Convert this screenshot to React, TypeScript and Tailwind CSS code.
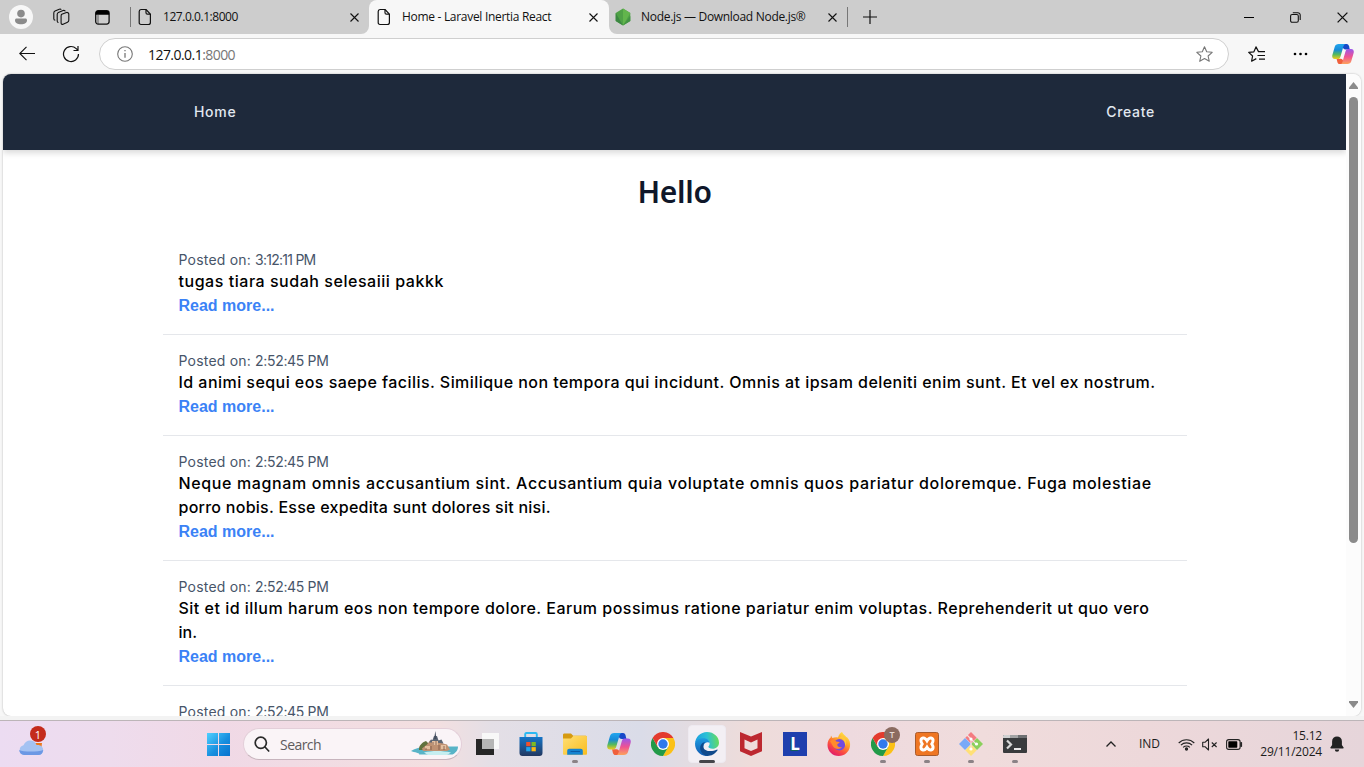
import React from 'react';

type Post = { time: string; timeCls: string; lines: { text: string; cls: string }[] };

const posts: Post[] = [
  {
    time: '3:12:11 PM',
    timeCls: 'tracking-[-0.75px]',
    lines: [{ text: 'tugas tiara sudah selesaiii pakkk', cls: 'tracking-[0.54px]' }],
  },
  {
    time: '2:52:45 PM',
    timeCls: 'tracking-[-0.33px]',
    lines: [
      {
        text: 'Id animi sequi eos saepe facilis. Similique non tempora qui incidunt. Omnis at ipsam deleniti enim sunt. Et vel ex nostrum.',
        cls: 'tracking-[0.452px]',
      },
    ],
  },
  {
    time: '2:52:45 PM',
    timeCls: 'tracking-[-0.33px]',
    lines: [
      {
        text: 'Neque magnam omnis accusantium sint. Accusantium quia voluptate omnis quos pariatur doloremque. Fuga molestiae',
        cls: 'tracking-[0.63px]',
      },
      { text: 'porro nobis. Esse expedita sunt dolores sit nisi.', cls: 'tracking-[0.26px]' },
    ],
  },
  {
    time: '2:52:45 PM',
    timeCls: 'tracking-[-0.33px]',
    lines: [
      {
        text: 'Sit et id illum harum eos non tempore dolore. Earum possimus ratione pariatur enim voluptas. Reprehenderit ut quo vero',
        cls: 'tracking-[0.492px]',
      },
      { text: 'in.', cls: 'tracking-[0px]' },
    ],
  },
  { time: '2:52:45 PM', timeCls: 'tracking-[-0.33px]', lines: [] },
];

function PageIcon() {
  return (
    <svg width="14" height="18" viewBox="0 0 14 18" fill="none" stroke="#111" strokeWidth="1.2" strokeLinejoin="round">
      <path d="M3 1.5h5l4.4 4.6v8.4a2 2 0 0 1-2 2H3a1.8 1.8 0 0 1-1.8-2V3.5a2 2 0 0 1 1.8-2z" />
      <path d="M8 1.7v3a1.5 1.5 0 0 0 1.5 1.5h2.8" />
    </svg>
  );
}

function CloseIcon({ size = 9 }: { size?: number }) {
  return (
    <svg width={size} height={size} viewBox="0 0 9 9" stroke="#111" strokeWidth="1.1" fill="none">
      <path d="M.5.5l8 8M8.5.5l-8 8" />
    </svg>
  );
}

function CopilotIcon({ size }: { size: number }) {
  return (
    <svg width={size} height={size} viewBox="0 0 24 24">
      <defs>
        <linearGradient id="cpA" x1="0" y1="0" x2="0" y2="1">
          <stop offset="0" stopColor="#22a6ee" />
          <stop offset=".4" stopColor="#168bd8" />
          <stop offset=".7" stopColor="#55b95e" />
          <stop offset="1" stopColor="#f0cb1b" />
        </linearGradient>
        <linearGradient id="cpB" x1="0" y1="0" x2="0" y2="1">
          <stop offset="0" stopColor="#9b57ec" />
          <stop offset=".5" stopColor="#ee5293" />
          <stop offset="1" stopColor="#fda35b" />
        </linearGradient>
      </defs>
      <path d="M12 1h4c1.6 0 2.2 1.2 2.6 2.6L19.4 7h-4.6c-2 0-2.6-1-3.2-3z" fill="#1748c8" />
      <path d="M12 23H8.6c-1.8 0-2.4-1.2-2.8-2.6L5 17.2h4.4c1.8 0 2.4 1 3 2.6z" fill="#f0603c" />
      <path d="M7.2 1H15c-1.4 0-2 1-2.5 2.6l-3.2 11c-.5 1.7-1.2 2.8-3 2.8H3.2C.6 17.4-.2 15.4.4 13L3 4C3.6 2 5 1 7.2 1z" fill="url(#cpA)" />
      <path d="M16.8 23H9c1.4 0 2-1 2.5-2.6l3.2-11c.5-1.7 1.2-2.8 3-2.8h3.1c2.6 0 3.4 2 2.8 4.4L21 20c-.6 2-2 3-4.2 3z" fill="url(#cpB)" />
    </svg>
  );
}

function ChromeIcon() {
  return (
    <svg width="24" height="24" viewBox="0 0 24 24">
      <path d="M12 6h10.4A12 12 0 0 1 12 24l5.2-9z" fill="#fbc116" />
      <path d="M17.2 15L12 24A12 12 0 0 1 1.6 6l5.2 9z" fill="#229a48" />
      <path d="M12 6h10.4A12 12 0 0 0 1.6 6l5.2 9z" fill="#e33b2e" />
      <circle cx="12" cy="12" r="6" fill="#fff" />
      <circle cx="12" cy="12" r="4.7" fill="#3079ec" />
    </svg>
  );
}

function EdgeIcon() {
  return (
    <svg width="24" height="24" viewBox="0 0 24 24">
      <defs>
        <linearGradient id="edA" x1="0" y1=".4" x2="1" y2=".3">
          <stop offset="0" stopColor="#1c9fe0" />
          <stop offset=".5" stopColor="#2bc0d6" />
          <stop offset="1" stopColor="#69dd55" />
        </linearGradient>
        <linearGradient id="edB" x1="0" y1="0" x2="0" y2="1">
          <stop offset="0" stopColor="#1f9be0" />
          <stop offset="1" stopColor="#1158b0" />
        </linearGradient>
      </defs>
      <path d="M0 11.5C.4 5 5.5 0 12 0c7 0 12 5 12 10.7 0 3.5-2.8 6-6.3 6-3 0-4.3-1.1-4.3-1.9 0-.8 1.2-1.2 1.2-3.3 0-2.5-2.5-4.5-6-4.5C4.6 7 1 8.5 0 11.5z" fill="url(#edA)" />
      <path d="M0 11.5C.5 8 4.5 6.2 8.500 6.2c3.6 0 6.1 2.3 6.1 4.8-1.3-1.4-5.8-.7-6.3 3.6-.4 4.2 2.5 7.4 5.7 9.2C6.5 25.3 0 19.5 0 11.5z" fill="url(#edB)" />
      <path d="M8.3 14.4c0-2 .6-3.4 2-4.4-3.5.5-5.3 3.5-5.1 6.5.3 4.2 4.3 8 8.8 7.3 3.7-.6 6.7-2.8 8.4-5.4.4-.6-.1-1-.7-.7-4.8 2.4-13 2-13.4-3.3z" fill="#104a8c" />
    </svg>
  );
}

function StoreIcon() {
  return (
    <svg width="24" height="24" viewBox="0 0 24 24">
      <defs>
        <linearGradient id="st" x1="0" y1="0" x2="0" y2="1">
          <stop offset="0" stopColor="#1575c8" />
          <stop offset="1" stopColor="#233860" />
        </linearGradient>
      </defs>
      <path d="M6.2 5V2.2c0-.7.4-1.2 1.2-1.2h9.2c.8 0 1.2.5 1.2 1.2V5" fill="none" stroke="#2bb9f2" strokeWidth="1.9" />
      <path d="M.5 5h23v16a3 3 0 0 1-3 3h-17a3 3 0 0 1-3-3z" fill="url(#st)" />
      <path d="M7.2 10h4.3v4.2H7.2z" fill="#f0512b" />
      <path d="M12.5 10h4.3v4.2h-4.3z" fill="#7fba22" />
      <path d="M7.2 15.1h4.3v4.2H7.2z" fill="#21a5ee" />
      <path d="M12.5 15.1h4.3v4.2h-4.3z" fill="#fdb813" />
    </svg>
  );
}

function FolderIcon() {
  return (
    <svg width="24" height="24" viewBox="0 0 24 24">
      <defs>
        <linearGradient id="fo" x1="0" y1="0" x2="1" y2="1">
          <stop offset="0" stopColor="#ffdf76" />
          <stop offset="1" stopColor="#f9bd1e" />
        </linearGradient>
      </defs>
      <path d="M0 3c0-1 .6-1.5 1.5-1.5H8l2.2 2.2H22c1.2 0 2 .5 2 1.5v5H0z" fill="#d69a10" />
      <path d="M0 6.500h8L10.500 3.700H22.500c1 0 1.500.5 1.500 1.500v16.500c0 .6-.5 1-1.200 1H1.200c-.7 0-1.200-.4-1.200-1z" fill="url(#fo)" />
      <path d="M4.200 22.700V19c0-1.400.8-2.200 2.200-2.200h11.200c1.400 0 2.200.8 2.200 2.200v3.700z" fill="#1583d0" />
      <path d="M8 19.500h8.500" stroke="#0b5aa5" strokeWidth="1.200" strokeLinecap="round" />
    </svg>
  );
}

function TaskViewIcon() {
  return (
    <svg width="24" height="24" viewBox="0 0 24 24">
      <path d="M1 7h18v16H1z" fill="#262626" />
      <path d="M7 1h17v16H7z" fill="#f8f8f8" />
      <path d="M7 7h12v10H7z" fill="#b5b5b5" />
    </svg>
  );
}

function McAfeeIcon() {
  return (
    <svg width="22" height="24" viewBox="0 0 22 24">
      <path d="M0 0l11 4.5L22 0v19.2L11 24 0 19.2z" fill="#bd2830" />
      <path d="M4.500 7.500l6.500 3 6.500-3v8.800L11 19l-6.500-2.700z" fill="#efdcdc" />
    </svg>
  );
}

function FirefoxIcon() {
  return (
    <svg width="24" height="24" viewBox="0 0 24 24">
      <defs>
        <linearGradient id="ff" x1=".85" y1="0" x2=".25" y2="1">
          <stop offset="0" stopColor="#fff04a" />
          <stop offset=".38" stopColor="#ffa52b" />
          <stop offset=".7" stopColor="#fa4b42" />
          <stop offset="1" stopColor="#dd1670" />
        </linearGradient>
      </defs>
      <path d="M4 3.500l1.400 2.500C7 5.500 9 5 11 5.500 11.500 3 13.500.8 15 0c1 2.300 3 3.300 4.300 5l1 .6c2.300 2.400 3.200 5.200 2.700 8.700C22.200 20 17.600 24 11.800 24 5.400 24 .5 19.200.5 13c0-3.500 1.300-6 3.200-7.500z" fill="url(#ff)" />
      <circle cx="12.400" cy="12.800" r="5.700" fill="#714be0" />
      <path d="M3 9c2.500-1.600 5-1.300 6.300.5l3.200.4c.8.6-1.800 1.500-2.200 2.700-.2 2.200 2.200 3.200 4.800 2.400-1.500 2.500-7.200 3-9.400-1.300z" fill="#ff8b2c" />
      <path d="M12 6c4 0 6.500 3 6 8 2.500-3 1.200-8-3-10z" fill="#ffc83d" />
    </svg>
  );
}

function XamppIcon() {
  return (
    <svg width="24" height="24" viewBox="0 0 24 24">
      <rect x=".5" y=".5" width="23" height="23" rx="2" fill="#ef7623" stroke="#a95b2c" />
      <path d="M8 6c2-.4 2.800.8 4 2.800C13.200 6.800 14 5.600 16 6c2.600.6 2.600 3.400.8 6 1.800 2.600 1.800 5.400-.8 6-2 .4-2.800-.8-4-2.800-1.200 2-2 3.200-4 2.800-2.600-.6-2.600-3.400-.8-6C5.400 9.400 5.400 6.600 8 6z" fill="none" stroke="#fff" strokeWidth="3" />
    </svg>
  );
}

function GitIcon() {
  return (
    <svg width="24" height="24" viewBox="0 0 24 24">
      <path d="M12 0l5.700 5.700-5.700 5.700-5.700-5.700z" fill="#f47b80" />
      <path d="M6 6l6 6-6 6-6-6z" fill="#79a9f7" />
      <path d="M18 6l6 6-6 6-6-6z" fill="#8bd05c" />
      <path d="M12 12.600l5.700 5.700L12 24l-5.700-5.700z" fill="#ffe077" />
      <path d="M8 3l4.500 4.500M12 8v9M13 8l4 4" stroke="#f4e2e2" strokeWidth="1.200" />
      <g fill="#fff">
        <circle cx="12" cy="7" r="1.600" />
        <circle cx="12" cy="17" r="1.600" />
        <circle cx="17.500" cy="12" r="1.600" />
      </g>
    </svg>
  );
}

function TerminalIcon() {
  return (
    <svg width="24" height="20" viewBox="0 0 24 20">
      <rect y="1" width="24" height="18" rx="1" fill="#393b3d" />
      <path d="M0 4V2a1 1 0 0 1 1-1h6v3z" fill="#cfd0d1" />
      <path d="M7 1h8v3H7z" fill="#a2a3a4" />
      <path d="M15 1h8a1 1 0 0 1 1 1v2h-9z" fill="#6f7173" />
      <path d="M4 6.500l4 4-4 4" fill="none" stroke="#d9d9d9" strokeWidth="2.200" />
      <path d="M11 15h7" stroke="#fff" strokeWidth="1.800" />
    </svg>
  );
}

function CastleIcon() {
  return (
    <svg width="48" height="26" viewBox="0 0 48 26">
      <path d="M0 20c4-2.500 10-4 14-4.500h33c0 4-2.500 6.500-5.500 8H8C10 22 3 21.500 0 20z" fill="#58b4c7" />
      <path d="M13 21.500c8-2 18-2 27 0L36 24H17z" fill="#c6eef0" />
      <path d="M8 17.500c.5-4 4-6.500 7-7.500l4 4v5H8z" fill="#60713d" />
      <path d="M11 17.500l5-4 3-4h9l4 3 4 1 3 5-3 1.500H12z" fill="#bf9172" />
      <path d="M18 11.500l2-3 1.500.5L23 5h3l1.500 4.500 3-1 2 4-7-1z" fill="#5d6674" />
      <path d="M24.300 0l1.200 8h-2.400z" fill="#424c5d" />
      <path d="M21 10h6v4h-6zM14 15h5v3h-5zM30 14h5v4h-5z" fill="#e4bf9f" />
      <path d="M22 11v3M25 10v4M15 17v2M20 15v4M28 14v5M33 15v4" stroke="#785548" strokeWidth=".8" />
    </svg>
  );
}

function TaskItem({ children, running, active }: { children: React.ReactNode; running?: boolean; active?: boolean }) {
  return (
    <div className="relative flex h-full w-11 items-center justify-center">
      {active && <div className="absolute top-[4px] left-[3px] h-[38px] w-[38px] rounded-[4px] border border-[#eeeaf1] bg-[#f3eff4]" />}
      <div className="relative flex">{children}</div>
      {running && <div className="absolute bottom-[4px] h-[3px] w-[6px] rounded-full bg-[#8b8286]" />}
      {active && <div className="absolute bottom-[4px] h-[3px] w-4 rounded-full bg-[#45454a]" />}
    </div>
  );
}

function TabStrip() {
  return (
    <div className="flex h-[34px] items-center bg-[#cdcdcd] font-['Open_Sans',sans-serif] text-[12px] text-[#111]">
      <div className="flex w-[130px] items-center pl-[9px]">
        <svg width="24" height="24" viewBox="0 0 24 24">
          <circle cx="12" cy="12" r="12" fill="#f7f7f7" />
          <circle cx="12" cy="8.600" r="3.800" fill="#8b8b8b" />
          <path d="M6 15.200c0-1 .6-1.600 1.600-1.600h8.800c1 0 1.600.6 1.600 1.600 0 2.600-2.500 4-6 4s-6-1.400-6-4z" fill="#8b8b8b" />
        </svg>
        <svg className="ml-[19px]" width="19" height="18" viewBox="0 0 19 18" fill="none" stroke="#111" strokeWidth="1.100" strokeLinejoin="round">
          <path d="M9.800 6.200l4.700-1.700c.9-.3 2.300.4 2.300 1.600v6.200c0 1-.4 1.500-1.300 1.900l-4.400 2c-1 .4-2-.1-2-1.200V8c0-.9.2-1.500.700-1.800z" />
          <path d="M6.500 14.500c-.8-.1-1.300-.6-1.300-1.500V6.300c0-.9.3-1.500 1.200-1.900l4.700-1.900c.9-.3 2 0 2.200.8M3.300 12.300c-.9-.1-1.500-.6-1.500-1.500V4.900c0-.9.3-1.500 1.200-1.900L7.300 1.200c.9-.3 1.600 0 1.900.6" />
        </svg>
        <svg className="ml-[24px]" width="15" height="15" viewBox="0 0 15 15">
          <rect x=".7" y=".7" width="13.400" height="13.400" rx="2.500" fill="none" stroke="#111" strokeWidth="1.300" />
          <path d="M.7 4.800V3A2.300 2.300 0 0 1 3 .7h9A2.300 2.300 0 0 1 14.200 3v1.800z" />
          <path d="M3 5v9" stroke="#111" strokeWidth=".6" />
        </svg>
      </div>
      <div className="h-5 w-px bg-[#777]" />
      <div className="flex w-[238px] items-center pl-[7px]">
        <PageIcon />
        <span className="ml-[11px] w-[187px] tracking-[-0.450px]">127.0.0.1:8000</span>
        <CloseIcon />
      </div>
      <div className="relative flex h-full w-[240px] items-center rounded-t-[8px] bg-[#f7f7f7] pl-[8px]">
        <PageIcon />
        <span className="ml-[11px] w-[187px] tracking-[-0.300px] whitespace-nowrap">Home - Laravel Inertia React</span>
        <CloseIcon />
        <svg className="absolute bottom-0 -left-2" width="8" height="8">
          <path d="M8 0v8H0a8 8 0 0 0 8-8z" fill="#f7f7f7" />
        </svg>
        <svg className="absolute -right-2 bottom-0" width="8" height="8">
          <path d="M0 0v8h8a8 8 0 0 1-8-8z" fill="#f7f7f7" />
        </svg>
      </div>
      <div className="flex w-[238px] items-center pl-[6px]">
        <svg width="16" height="18" viewBox="0 0 16 18">
          <path d="M8 .6L15.300 5v8L8 17.400.7 13V5z" fill="#4fa146" />
          <path d="M8 .6L15.300 5 8 17.400z" fill="#62b54c" />
          <path d="M.7 5L8 17.400.7 13z" fill="#3c8742" />
          <path d="M15.300 8v5L8 17.400z" fill="#439343" />
        </svg>
        <span className="ml-[10px] w-[187px] tracking-[-0.300px] whitespace-nowrap">Node.js — Download Node.js®</span>
        <CloseIcon />
      </div>
      <div className="h-5 w-px bg-[#777]" />
      <svg className="ml-[15px]" width="14" height="14" viewBox="0 0 14 14" stroke="#111" strokeWidth="1.200">
        <path d="M7 0v14M0 7h14" />
      </svg>
      <div className="ml-auto flex items-center pr-[16px]">
        <div className="h-px w-[10px] bg-black" />
        <svg className="ml-[36px]" width="11" height="11" viewBox="0 0 11 11" fill="none" stroke="#111" strokeWidth="1.100">
          <rect x=".6" y="2.500" width="7.700" height="7.700" rx="1.500" />
          <path d="M2.800.7h5a2.400 2.400 0 0 1 2.400 2.400v4.800" />
        </svg>
        <div className="ml-[36px]">
          <CloseIcon size={11} />
        </div>
      </div>
    </div>
  );
}

function Toolbar() {
  return (
    <div className="flex h-[40px] items-center bg-[#f7f7f7]">
      <svg className="ml-[19px]" width="16" height="16" viewBox="0 0 16 16" fill="none" stroke="#111" strokeWidth="1.100">
        <path d="M16 7.500H.8M7.500.8L.8 7.500l6.700 6.700" />
      </svg>
      <svg className="ml-[27px]" width="18" height="18" viewBox="0 0 18 18" fill="none" stroke="#111" strokeWidth="1.200">
        <path d="M16.500 9a7.500 7.500 0 1 1-2.300-5.400L16 5.300M16 1v4.500h-4.500" />
      </svg>
      <div className="ml-[19px] flex h-[32px] w-[1130px] items-center rounded-full border border-[#cfcfcf] bg-white">
        <svg className="ml-[17px]" width="16" height="16" viewBox="0 0 16 16" fill="none" stroke="#777" strokeWidth="1.100">
          <circle cx="8" cy="8" r="7.300" />
          <path d="M8 7v4.800M8 4v1.300" strokeWidth="1.300" />
        </svg>
        <span className="ml-[15px] font-['Open_Sans',sans-serif] text-[14px] tracking-[-0.550px] text-[#111]">
          127.0.0.1<span className="text-[#767676]">:8000</span>
        </span>
        <svg className="mr-[15px] ml-auto" width="17" height="16" viewBox="0 0 17 16" fill="none" stroke="#777" strokeWidth="1.100" strokeLinejoin="round">
          <path d="M8.500.8l2.200 5 5.500.5-4.100 3.700 1.200 5.300-4.800-2.800-4.800 2.800L4.900 10 .8 6.300l5.500-.5z" />
        </svg>
      </div>
      <svg className="ml-[19px]" width="17" height="16" viewBox="0 0 17 16" fill="none" stroke="#111" strokeWidth="1.200" strokeLinejoin="round">
        <path d="M11.500 5.700l-1-.1L8 .9l-2.100 4.900-5.200.6 3.900 3.600-1 5.200 4.700-2.600M11 5.700h6M9.500 9.500H17M11 13.200h6" />
      </svg>
      <svg className="ml-[28px]" width="15" height="4" viewBox="0 0 15 4">
        <circle cx="2" cy="2" r="1.300" />
        <circle cx="7.500" cy="2" r="1.300" />
        <circle cx="13" cy="2" r="1.300" />
      </svg>
      <div className="ml-[24px] shrink-0">
        <CopilotIcon size={22} />
      </div>
    </div>
  );
}

function WebPage() {
  return (
    <div className="mx-[3px] flex h-[642px] overflow-hidden rounded-[8px] bg-white shadow-[0_0_2px_#aaa]">
      <div className="w-[1343px] overflow-hidden font-['Inter',sans-serif]">
        <header className="h-[76px] bg-[#1e293b] shadow-[0_3px_6px_rgba(0,0,0,0.15)]">
          <nav className="flex items-center justify-between pt-[28px] pr-[191px] pl-[191px] text-[14px] leading-5 font-medium tracking-[0.700px] text-[#e2e8f0]">
            <a>Home</a>
            <a>Create</a>
          </nav>
        </header>
        <h1 className="mt-[24px] text-center font-['Noto_Sans',sans-serif] text-[30px] leading-9 font-semibold tracking-[-0.300px] text-[#0f172a]">Hello</h1>
        <main className="mx-auto mt-[24px] w-[1024px]">
          {posts.map((post, i) => (
            <article key={i} className="border-b border-[#e5e7eb] p-4">
              <p className="text-[14px] leading-5 text-[#475569]">
                <span className="tracking-[0.200px]">Posted on: </span>
                <span className={post.timeCls}>{post.time}</span>
              </p>
              {post.lines.length > 0 && (
                <>
                  <div className="-mt-px mb-px">
                    {post.lines.map((line) => (
                      <p key={line.text} className="text-[16px] leading-6 font-medium whitespace-nowrap text-black">
                        <span className={line.cls}>{line.text}</span>
                      </p>
                    ))}
                  </div>
                  <a className="block font-['Liberation_Sans',sans-serif] text-[16px] leading-6 font-bold text-[#3b82f6]">Read more...</a>
                </>
              )}
            </article>
          ))}
        </main>
      </div>
      <div className="flex w-[15px] flex-col items-center bg-[#fcfcfc]">
        <svg className="mt-[8px]" width="9" height="7">
          <path d="M4.500 0L9 5.500V7H0V5.500z" fill="#8b8b8b" />
        </svg>
        <div className="mt-[8px] h-[446px] w-[9px] rounded-full bg-[#8b8b8b]" />
        <svg className="mt-auto mb-[8px]" width="9" height="7">
          <path d="M4.500 7L9 1.500V0H0v1.500z" fill="#8b8b8b" />
        </svg>
      </div>
    </div>
  );
}

function Taskbar() {
  return (
    <footer className="flex h-[47px] items-center border-t border-[#bcb5b8] bg-[linear-gradient(90deg,#ecdcf2_0%,#eedced_8%,#f0d9e6_16%,#f3dfe0_32%,#e4dfe6_36%,#dadce8_47%,#eedcda_55%,#eedadf_62%,#f0dcdc_72%,#edd8da_84%,#e6d5da_100%)] font-['Open_Sans',sans-serif]">
      <div className="relative flex w-[207px] pl-[19px]">
        <svg className="mt-[7px]" width="25" height="17" viewBox="0 0 25 17">
          <path d="M15 4h8l-1 8z" fill="#ed781b" />
          <path d="M5 16a5 5 0 0 1-.5-9.800C6 2.500 9 1 12 1.500c3.200.4 5 2.500 5.500 4.500 4-.6 6.700 1.800 6.700 5 0 3-2 5-5 5z" fill="#a4c2f2" />
          <path d="M5 16a5 5 0 0 1-4.800-5c4 2 19 2 24 0-.3 3-2 5-5 5z" fill="#6c98e4" />
        </svg>
        <div className="absolute -top-[6px] left-[30px] flex size-4 items-center justify-center rounded-full bg-[#c42b1c] text-[11px] leading-none text-white">1</div>
      </div>
      <svg width="23" height="23" viewBox="0 0 23 23">
        <defs>
          <linearGradient id="win" x1="0" y1="0" x2="23" y2="23" gradientUnits="userSpaceOnUse">
            <stop offset="0" stopColor="#4fd0ff" />
            <stop offset=".55" stopColor="#188fdf" />
            <stop offset="1" stopColor="#0872ce" />
          </linearGradient>
        </defs>
        <path d="M0 0h11v11H0zM12 0h11v11H12zM0 12h11v11H0zM12 12h11v11H12z" fill="url(#win)" />
      </svg>
      <div className="ml-[13px] flex h-[32px] w-[219px] items-center rounded-full border border-[#e3cfd9] border-b-[#c7b4bd] bg-[#faf4f7] pl-[10px]">
        <svg width="16" height="16" viewBox="0 0 16 16" fill="none" stroke="#292929" strokeWidth="1.700" strokeLinecap="round">
          <circle cx="6.800" cy="6.800" r="5.600" />
          <path d="M11 11l3.700 4" />
        </svg>
        <span className="ml-[10px] text-[14px] tracking-[-0.550px] text-[#5f5b5d]">Search</span>
        <div className="mr-[2px] ml-auto">
          <CastleIcon />
        </div>
      </div>
      <div className="ml-[3px] flex h-full">
        <TaskItem><TaskViewIcon /></TaskItem>
        <TaskItem><StoreIcon /></TaskItem>
        <TaskItem running><FolderIcon /></TaskItem>
        <TaskItem><CopilotIcon size={24} /></TaskItem>
        <TaskItem><ChromeIcon /></TaskItem>
        <TaskItem active><EdgeIcon /></TaskItem>
        <TaskItem><McAfeeIcon /></TaskItem>
        <TaskItem>
          <div className="flex size-6 items-center justify-center bg-[#1e3fae] text-[17px] font-bold text-white [text-shadow:-1px_1px_0_#12605d]">L</div>
        </TaskItem>
        <TaskItem><FirefoxIcon /></TaskItem>
        <TaskItem running>
          <ChromeIcon />
          <div className="absolute -top-[5px] left-[13px] flex size-4 items-center justify-center rounded-full bg-[#8b6b60] text-[9px] font-semibold text-[#e7dad5]">T</div>
        </TaskItem>
        <TaskItem running><XamppIcon /></TaskItem>
        <TaskItem running><GitIcon /></TaskItem>
        <TaskItem running><TerminalIcon /></TaskItem>
      </div>
      <div className="ml-auto flex items-center pr-[20px] text-[12px] text-[#1c1c1c]">
        <svg width="10" height="6" viewBox="0 0 10 6" fill="none" stroke="#222" strokeWidth="1.300">
          <path d="M.5 5.500L5 1l4.500 4.500" />
        </svg>
        <span className="ml-[23px] w-[39px] tracking-[-0.100px]">IND</span>
        <svg width="17" height="13" viewBox="0 0 17 13" fill="none" stroke="#222" strokeWidth="1.100">
          <path d="M.7 5a11 11 0 0 1 15.600 0M2.900 7.200a8 8 0 0 1 11.200 0M5.100 9.400a5 5 0 0 1 6.800 0" />
          <circle cx="8.500" cy="11" r="1.100" fill="#222" />
        </svg>
        <svg className="ml-[7px]" width="17" height="13" viewBox="0 0 17 13" fill="none" stroke="#222" strokeWidth="1.100" strokeLinejoin="round">
          <path d="M.7 4.300H3L6.500 1v11L3 8.700H.7zM9.800 4.500l4.800 4.500M14.600 4.500L9.800 9" />
        </svg>
        <svg className="ml-[7px]" width="17" height="11" viewBox="0 0 17 11">
          <rect x=".6" y=".6" width="13.500" height="9.800" rx="2.200" fill="none" stroke="#222" strokeWidth="1.100" />
          <rect x="2.300" y="2.300" width="9" height="6.400" rx=".6" />
          <path d="M14.800 3.500h.8v4h-.8z" stroke="#222" />
        </svg>
        <div className="ml-[15px] flex w-[64px] flex-col items-end leading-4 tracking-[-0.200px]">
          <span>15.12</span>
          <span>29/11/2024</span>
        </div>
        <svg className="ml-[8px]" width="14" height="16" viewBox="0 0 14 16" fill="#222">
          <path d="M7 .4a4.900 4.900 0 0 1 4.900 4.900V9l1.700 2.500c.2.500 0 .9-.6.900H1c-.6 0-.8-.4-.6-.9L2.100 9V5.300A4.900 4.900 0 0 1 7 .4zM4.800 13.600h4.400a2.200 2.200 0 0 1-4.400 0z" />
        </svg>
      </div>
    </footer>
  );
}

export default function App() {
  return (
    <div className="flex h-[767px] w-[1364px] flex-col overflow-hidden bg-[#f7f7f7]">
      <TabStrip />
      <Toolbar />
      <WebPage />
      <div className="h-[4px] bg-[#f3f3f3]" />
      <Taskbar />
    </div>
  );
}
